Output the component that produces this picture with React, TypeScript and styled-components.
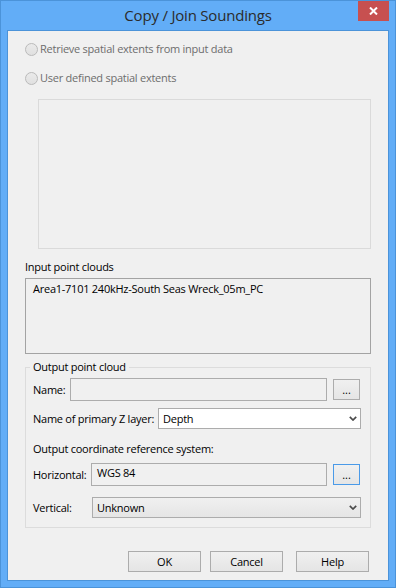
import React from 'react';
import styled, { createGlobalStyle } from 'styled-components';

const Global = createGlobalStyle`
  html, body { margin: 0; padding: 0; background: #ffffff; }
  body { font-family: "Open Sans", "Noto Sans", sans-serif; font-size: 11px; }
  * { box-sizing: border-box; }
`;

const Window = styled.div`
  width: 396px;
  height: 588px;
  border: 1px solid #4b93d9;
  background: #62adf7;
  padding: 0 6px 6px;
  display: flex;
  flex-direction: column;
`;

const TitleBar = styled.div`
  position: relative;
  height: 29px;
  display: flex;
  align-items: center;
  justify-content: center;
  font-size: 15px;
  letter-spacing: -0.2px;
  color: #2b2b2b;
  padding-bottom: 1px;
`;

const CloseButton = styled.div`
  position: absolute;
  top: 0;
  right: 0;
  width: 31px;
  height: 20px;
  background: #c75050;
  display: flex;
  align-items: center;
  justify-content: center;
`;

const Client = styled.div`
  flex: 1;
  border: 1px solid #4b93d9;
  background: #f0f0f0;
  padding: 0 17px 8px;
  display: flex;
  flex-direction: column;
  color: #000;
  letter-spacing: -0.25px;
`;

const RadioRow = styled.div<{ $mt: number }>`
  margin-top: ${(p) => p.$mt}px;
  height: 16px;
  line-height: 16px;
  display: flex;
  align-items: center;
  gap: 2px;
  color: #6d6d6d;
`;

const RadioCircle = styled.span`
  width: 13px;
  height: 13px;
  border-radius: 50%;
  border: 1px solid #bababa;
  background: linear-gradient(#eaeaea, #e0e0e0);
  flex: none;
`;

const ExtentBox = styled.div`
  margin: 13px 0 0 13px;
  height: 150px;
  border: 1px solid #dadada;
`;

const SectionLabel = styled.div<{ $mt: number }>`
  margin-top: ${(p) => p.$mt}px;
  line-height: 16px;
  height: 16px;
`;

const ListBox = styled.div`
  margin-top: 3px;
  height: 76px;
  border: 1px solid #a3a3a3;
  padding: 2px 7px;
  line-height: 16px;
`;

const GroupBox = styled.div`
  position: relative;
  margin-top: 13px;
  border: 1px solid #dcdcdc;
  padding: 10px 9px 9px 7px;
  display: flex;
  flex-direction: column;
`;

const GroupTitle = styled.div`
  position: absolute;
  top: -9px;
  left: 4px;
  padding: 0 3px;
  background: #f0f0f0;
  line-height: 16px;
`;

const FormRow = styled.div<{ $mt: number }>`
  margin-top: ${(p) => p.$mt}px;
  display: flex;
  align-items: center;
`;

const FieldLabel = styled.div<{ $w: number }>`
  width: ${(p) => p.$w}px;
  flex: none;
  line-height: 16px;
  white-space: nowrap;
`;

const TextField = styled.div`
  flex: 1;
  height: 23px;
  border: 1px solid #acacac;
  background: #f0f0f0;
  padding: 1px 5px 0;
  line-height: 16px;
`;

const DotsButton = styled.div<{ $focused?: boolean }>`
  flex: none;
  width: 27px;
  height: 21px;
  margin: 0 1px 0 6px;
  border: 1px solid ${(p) => (p.$focused ? '#4a9ae8' : '#acacac')};
  background: linear-gradient(#f0f0f0, #e5e5e5);
  display: flex;
  align-items: center;
  justify-content: center;
  line-height: 16px;
  letter-spacing: 0;
`;

const Combo = styled.div<{ $flat?: boolean }>`
  flex: 1;
  height: 21px;
  border: 1px solid #acacac;
  background: ${(p) => (p.$flat ? '#ffffff' : 'linear-gradient(#f0f0f0, #e5e5e5)')};
  display: flex;
  align-items: center;
  justify-content: space-between;
  padding: 0 3px 0 4px;
  line-height: 16px;
`;

const ButtonRow = styled.div`
  margin-top: 23px;
  display: flex;
  justify-content: flex-end;
  padding-right: 2px;
`;

const DialogButton = styled.div<{ $mr: number }>`
  width: 73px;
  height: 21px;
  margin-right: ${(p) => p.$mr}px;
  border: 1px solid #acacac;
  background: linear-gradient(#f0f0f0, #e5e5e5);
  display: flex;
  align-items: center;
  justify-content: center;
  line-height: 16px;
`;

const Chevron = () => (
  <svg width="8" height="5" viewBox="0 0 8 5">
    <path d="M0.8 0.8 L4 4 L7.2 0.8" fill="none" stroke="#4a4a4a" strokeWidth="1.7" />
  </svg>
);

export default function App() {
  return (
    <>
      <Global />
      <Window>
        <TitleBar>
          Copy / Join Soundings
          <CloseButton>
            <svg width="9" height="8" viewBox="0 0 9 8">
              <path d="M1 0.5 L8 7.5 M8 0.5 L1 7.5" stroke="#ffffff" strokeWidth="2" />
            </svg>
          </CloseButton>
        </TitleBar>
        <Client>
          <RadioRow $mt={10}>
            <RadioCircle />
            Retrieve spatial extents from input data
          </RadioRow>
          <RadioRow $mt={13}>
            <RadioCircle />
            User defined spatial extents
          </RadioRow>
          <ExtentBox />
          <SectionLabel $mt={10}>Input point clouds</SectionLabel>
          <ListBox>Area1-7101 240kHz-South Seas Wreck_05m_PC</ListBox>
          <GroupBox>
            <GroupTitle>Output point cloud</GroupTitle>
            <FormRow $mt={0}>
              <FieldLabel $w={37}>Name:</FieldLabel>
              <TextField />
              <DotsButton>...</DotsButton>
            </FormRow>
            <FormRow $mt={7}>
              <FieldLabel $w={125}>Name of primary Z layer:</FieldLabel>
              <Combo $flat>
                Depth
                <Chevron />
              </Combo>
            </FormRow>
            <SectionLabel $mt={12}>Output coordinate reference system:</SectionLabel>
            <FormRow $mt={6}>
              <FieldLabel $w={58}>Horizontal:</FieldLabel>
              <TextField>WGS 84</TextField>
              <DotsButton $focused>...</DotsButton>
            </FormRow>
            <FormRow $mt={11}>
              <FieldLabel $w={59}>Vertical:</FieldLabel>
              <Combo>
                Unknown
                <Chevron />
              </Combo>
            </FormRow>
          </GroupBox>
          <ButtonRow>
            <DialogButton $mr={9}>OK</DialogButton>
            <DialogButton $mr={13}>Cancel</DialogButton>
            <DialogButton $mr={0}>Help</DialogButton>
          </ButtonRow>
        </Client>
      </Window>
    </>
  );
}
